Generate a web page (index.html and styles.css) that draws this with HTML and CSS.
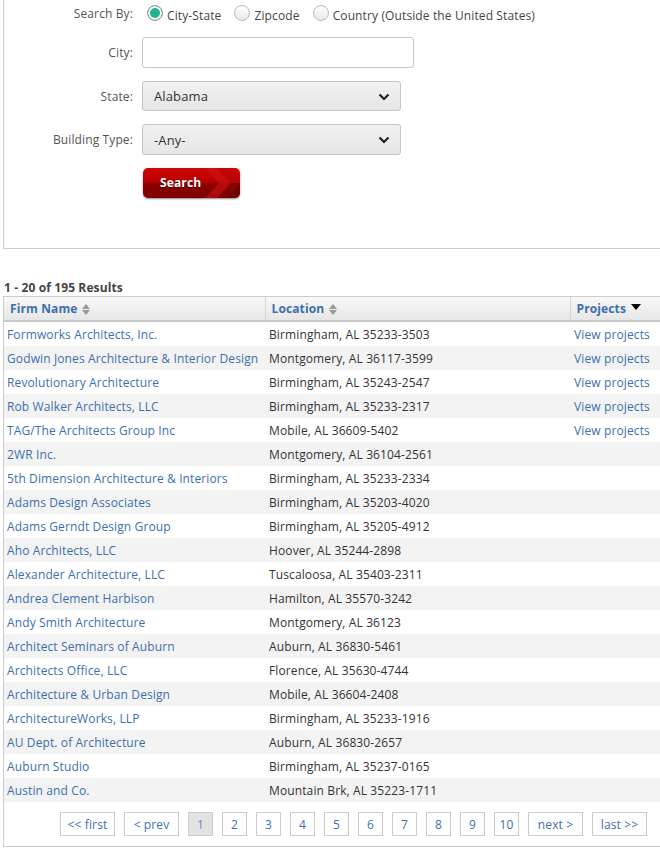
FILE: index.html
```html
<!DOCTYPE html>
<html>
<head>
<meta charset="utf-8">
<link rel="stylesheet" href="styles.css">
</head>
<body>
<div class="page">
  <form class="search-panel">
    <div class="frow radio-row">
      <label class="flabel">Search By:</label>
      <div class="radios">
        <span class="radio checked"></span><span class="rtext">City-State</span>
        <span class="radio"></span><span class="rtext">Zipcode</span>
        <span class="radio"></span><span class="rtext">Country (Outside the United States)</span>
      </div>
    </div>
    <div class="frow city-row">
      <label class="flabel">City:</label>
      <div class="text-input"></div>
    </div>
    <div class="frow state-row">
      <label class="flabel">State:</label>
      <div class="select"><span>Alabama</span>
        <svg class="caret" width="12" height="8" viewBox="0 0 12 8"><path d="M1.5 1.5 L6 6 L10.5 1.5" fill="none" stroke="#222" stroke-width="2.2"/></svg>
      </div>
    </div>
    <div class="frow type-row">
      <label class="flabel">Building Type:</label>
      <div class="select"><span>-Any-</span>
        <svg class="caret" width="12" height="8" viewBox="0 0 12 8"><path d="M1.5 1.5 L6 6 L10.5 1.5" fill="none" stroke="#222" stroke-width="2.2"/></svg>
      </div>
    </div>
    <div class="frow btn-row">
      <span class="flabel"></span>
      <div class="search-btn">
        <svg class="chevrons" width="97" height="30" viewBox="0 0 97 30">
          <polygon points="62,0 74,0 88,15 74,30 62,30 76,15" fill="#d41414" opacity="0.55"/>
          <polygon points="74,0 84,0 98,15 84,30 74,30 88,15" fill="#b80808" opacity="0.6"/>
          <polygon points="88,15 97,15 97,30 74,30" fill="#5a0000" opacity="0.45"/>
        </svg>
        <span class="btn-text">Search</span>
      </div>
    </div>
  </form>

  <div class="results-count">1 - 20 of 195 Results</div>

  <div class="results">
    <table class="grid">
      <colgroup><col class="c1"><col class="c2"><col class="c3"></colgroup>
      <thead>
        <tr>
          <th>Firm Name <span class="sort"><i class="up"></i><i class="down"></i></span></th>
          <th>Location <span class="sort"><i class="up"></i><i class="down"></i></span></th>
          <th>Projects <span class="desc"></span></th>
        </tr>
      </thead>
      <tbody>
        <tr><td><a>Formworks Architects, Inc.</a></td><td>Birmingham, AL 35233-3503</td><td><a>View projects</a></td></tr>
        <tr><td><a>Godwin Jones Architecture &amp; Interior Design</a></td><td>Montgomery, AL 36117-3599</td><td><a>View projects</a></td></tr>
        <tr><td><a>Revolutionary Architecture</a></td><td>Birmingham, AL 35243-2547</td><td><a>View projects</a></td></tr>
        <tr><td><a>Rob Walker Architects, LLC</a></td><td>Birmingham, AL 35233-2317</td><td><a>View projects</a></td></tr>
        <tr><td><a>TAG/The Architects Group Inc</a></td><td>Mobile, AL 36609-5402</td><td><a>View projects</a></td></tr>
        <tr><td><a>2WR Inc.</a></td><td>Montgomery, AL 36104-2561</td><td></td></tr>
        <tr><td><a>5th Dimension Architecture &amp; Interiors</a></td><td>Birmingham, AL 35233-2334</td><td></td></tr>
        <tr><td><a>Adams Design Associates</a></td><td>Birmingham, AL 35203-4020</td><td></td></tr>
        <tr><td><a>Adams Gerndt Design Group</a></td><td>Birmingham, AL 35205-4912</td><td></td></tr>
        <tr><td><a>Aho Architects, LLC</a></td><td>Hoover, AL 35244-2898</td><td></td></tr>
        <tr><td><a>Alexander Architecture, LLC</a></td><td>Tuscaloosa, AL 35403-2311</td><td></td></tr>
        <tr><td><a>Andrea Clement Harbison</a></td><td>Hamilton, AL 35570-3242</td><td></td></tr>
        <tr><td><a>Andy Smith Architecture</a></td><td>Montgomery, AL 36123</td><td></td></tr>
        <tr><td><a>Architect Seminars of Auburn</a></td><td>Auburn, AL 36830-5461</td><td></td></tr>
        <tr><td><a>Architects Office, LLC</a></td><td>Florence, AL 35630-4744</td><td></td></tr>
        <tr><td><a>Architecture &amp; Urban Design</a></td><td>Mobile, AL 36604-2408</td><td></td></tr>
        <tr><td><a>ArchitectureWorks, LLP</a></td><td>Birmingham, AL 35233-1916</td><td></td></tr>
        <tr><td><a>AU Dept. of Architecture</a></td><td>Auburn, AL 36830-2657</td><td></td></tr>
        <tr><td><a>Auburn Studio</a></td><td>Birmingham, AL 35237-0165</td><td></td></tr>
        <tr><td><a>Austin and Co.</a></td><td>Mountain Brk, AL 35223-1711</td><td></td></tr>
      </tbody>
    </table>
    <div class="pager">
      <a class="pg wide">&lt;&lt; first</a>
      <a class="pg wide">&lt; prev</a>
      <a class="pg current">1</a>
      <a class="pg">2</a>
      <a class="pg">3</a>
      <a class="pg">4</a>
      <a class="pg">5</a>
      <a class="pg">6</a>
      <a class="pg">7</a>
      <a class="pg">8</a>
      <a class="pg">9</a>
      <a class="pg">10</a>
      <a class="pg wide">next &gt;</a>
      <a class="pg wide">last &gt;&gt;</a>
    </div>
  </div>
</div>
</body>
</html>
```

FILE: styles.css
```css
html, body {
  margin: 0;
  padding: 0;
  overflow: hidden;
  background: #fff;
}
body {
  font-family: "Open Sans", "DejaVu Sans", sans-serif;
  font-size: 12px;
  letter-spacing: 0.12px;
  color: #333;
}
.page {
  padding-left: 3px;
  width: 700px;
}
.search-panel {
  border-left: 1px solid #ccc;
  border-bottom: 1px solid #ccc;
  padding: 4px 0 50px 0;
  margin: 0;
}
.frow {
  display: flex;
  align-items: center;
}
.flabel {
  width: 129px;
  text-align: right;
  color: #555;
  margin-right: 9px;
  flex: none;
}
.radio-row { height: 18px; }
.radios {
  display: flex;
  align-items: center;
  color: #444;
}
.radio {
  width: 14px;
  height: 14px;
  border-radius: 50%;
  border: 1px solid #bbb;
  background: linear-gradient(#fff, #e8e8e8);
  margin: 0 4px 0 9px;
  box-sizing: content-box;
  position: relative;
}
.radio.checked {
  margin-left: 5px;
  background: #1fb38e;
  border-color: #999;
  box-shadow: inset 0 0 0 2px #fff;
}
.rtext { margin-top: 4px; margin-right: 4px; }
.city-row { margin-top: 15px; }
.text-input {
  width: 270px;
  height: 29px;
  border: 1px solid #c8c8c8;
  border-radius: 3px;
  background: #fff;
}
.state-row { margin-top: 13px; }
.type-row { margin-top: 13px; }
.select {
  width: 257px;
  height: 28px;
  border: 1px solid #c5c5c5;
  border-radius: 3px;
  background: linear-gradient(#f1f1f1, #e6e6e6);
  position: relative;
  display: flex;
  align-items: center;
  font-size: 13px;
  color: #333;
}
.select span { padding-left: 11px; }
.type-row .select { height: 29px; }
.caret {
  position: absolute;
  right: 10px;
  top: 11px;
}
.btn-row { margin-top: 13px; }
.search-btn {
  position: relative;
  width: 97px;
  height: 30px;
  margin-left: 1px;
  border-radius: 5px;
  overflow: hidden;
  background: linear-gradient(#d10606 0%, #b80000 45%, #8e0000 55%, #7c0000 100%);
  box-shadow: 0 1px 2px rgba(0,0,0,0.45);
}
.chevrons { position: absolute; left: 0; top: 0; }
.btn-text {
  position: absolute;
  left: 17px;
  top: 6px;
  color: #fff;
  font-weight: bold;
  font-size: 12px;
  text-shadow: 0 1px 1px #400;
}
.results-count {
  margin-top: 31px;
  margin-left: 1px;
  font-weight: bold;
  color: #444;
  line-height: 16px;
  height: 16px;
}
.results {
  border-left: 1px solid #ccc;
  border-top: 1px solid #ccc;
  border-bottom: 1px solid #ccc;
  padding-bottom: 10px;
}
.grid {
  border-collapse: collapse;
  table-layout: fixed;
  width: 699px;
}
.c1 { width: 261px; }
.c2 { width: 305px; }
.c3 { width: 133px; }
.grid th {
  height: 23px;
  padding: 0 0 0 6px;
  text-align: left;
  font-weight: bold;
  color: #3d6fb0;
  background: linear-gradient(#f8f8f8, #e6e6e6);
  border-bottom: 2px solid #c9c9c9;
  border-left: 1px solid #d6d6d6;
  white-space: nowrap;
}
.grid th:first-child { border-left: none; }
.sort {
  display: inline-block;
  vertical-align: middle;
  width: 9px;
  height: 11px;
  position: relative;
  margin-left: 1px;
}
.sort .up, .sort .down {
  position: absolute;
  left: 0;
  width: 0; height: 0;
  border-left: 4.5px solid transparent;
  border-right: 4.5px solid transparent;
}
.sort .up { top: 0; border-bottom: 5px solid #999; }
.sort .down { bottom: 0; border-top: 5px solid #999; }
.desc {
  display: inline-block;
  width: 0; height: 0;
  border-left: 5px solid transparent;
  border-right: 5px solid transparent;
  border-top: 6px solid #000;
  vertical-align: 3px;
  margin-left: 2px;
}
.grid td {
  height: 24px;
  padding: 0 0 0 4px;
  white-space: nowrap;
  color: #333;
}
.grid td:first-child { padding-left: 3px; }
.grid tbody tr:nth-child(even) td { background: #f3f3f3; }
.grid a { color: #3d6fb0; }
.pager {
  display: flex;
  justify-content: center;
  gap: 9px;
  margin-top: 10px;
}
.pg {
  box-sizing: border-box;
  width: 25px;
  height: 24px;
  border: 1px solid #ccc;
  display: flex;
  align-items: center;
  justify-content: center;
  color: #3d6fb0;
  background: #fff;
}
.pg.wide { width: 55px; }
.pg.current { background: #e2e2e2; color: #6b8cb8; }
```
